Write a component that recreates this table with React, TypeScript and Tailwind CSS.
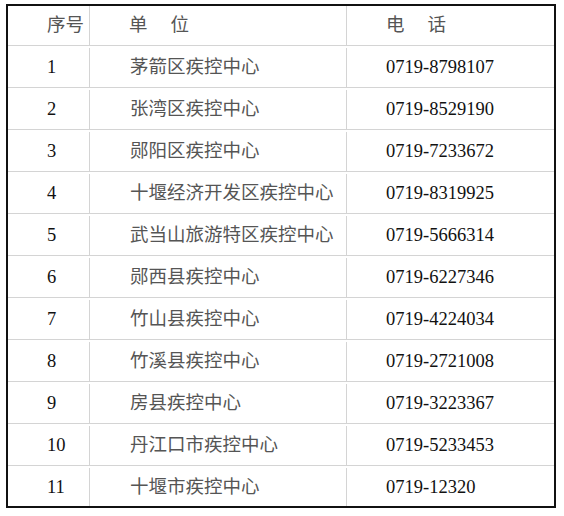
import React from "react";

const rows: [string, string, string][] = [
  ["1", "茅箭区疾控中心", "0719-8798107"],
  ["2", "张湾区疾控中心", "0719-8529190"],
  ["3", "郧阳区疾控中心", "0719-7233672"],
  ["4", "十堰经济开发区疾控中心", "0719-8319925"],
  ["5", "武当山旅游特区疾控中心", "0719-5666314"],
  ["6", "郧西县疾控中心", "0719-6227346"],
  ["7", "竹山县疾控中心", "0719-4224034"],
  ["8", "竹溪县疾控中心", "0719-2721008"],
  ["9", "房县疾控中心", "0719-3223367"],
  ["10", "丹江口市疾控中心", "0719-5233453"],
  ["11", "十堰市疾控中心", "0719-12320"],
];

const font = {
  fontFamily: '"Liberation Serif", "Noto Sans CJK SC", serif',
};

export default function App() {
  return (
    <div className="w-[564px] h-[516px] bg-white pl-[6px] pt-[4px]" style={font}>
      <div className="w-[550px] h-[504px] border-2 border-[#111] flex flex-col text-[18.5px] leading-none">
        <div className="flex h-[40px] border-b border-[#d4d4d4] text-[#555]">
          <div className="w-[81px] flex items-center pl-[39px]">序号</div>
          <div className="w-[257px] flex items-center pl-[39px] border-l border-[#d4d4d4]">
            <span>单</span>
            <span className="ml-[23px]">位</span>
          </div>
          <div className="flex-1 flex items-center pl-[39px] border-l border-[#d4d4d4]">
            <span>电</span>
            <span className="ml-[23px]">话</span>
          </div>
        </div>
        {rows.map(([n, name, tel], i) => (
          <div
            key={n}
            className={
              i === rows.length - 1
                ? "flex h-[40px] pt-[2px]"
                : "flex h-[42px] pt-[2px] border-b border-[#d4d4d4]"
            }
          >
            <div className="w-[81px] flex items-center pl-[39px] text-[#111]">{n}</div>
            <div className="w-[257px] flex items-center pl-[40px] border-l border-[#d4d4d4] text-[#555]">
              {name}
            </div>
            <div className="flex-1 flex items-center pl-[39px] border-l border-[#d4d4d4] text-[#111]">
              {tel}
            </div>
          </div>
        ))}
      </div>
    </div>
  );
}
